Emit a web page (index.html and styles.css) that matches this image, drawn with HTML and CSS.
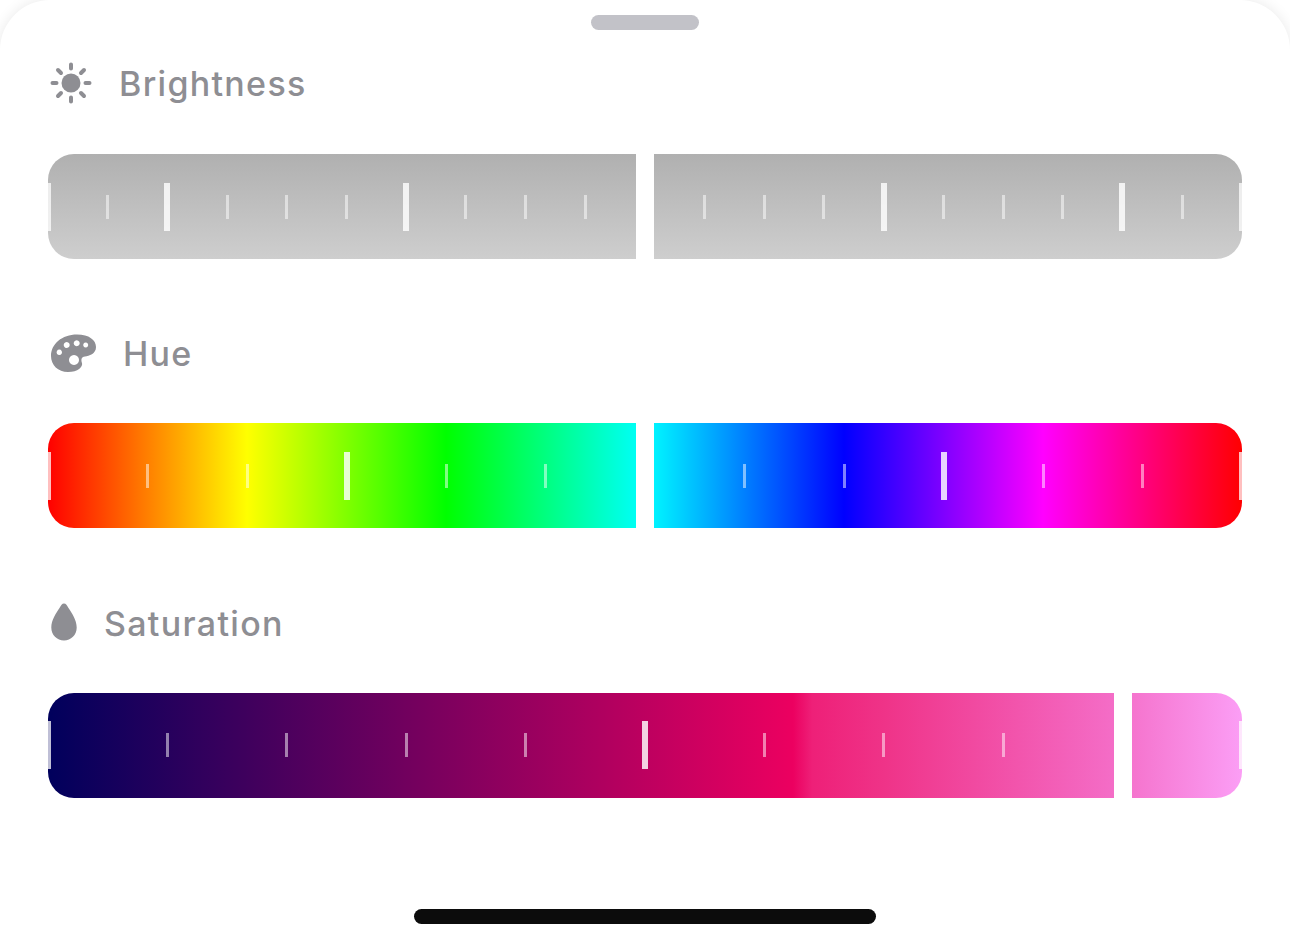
FILE: index.html
```html
<!DOCTYPE html>
<html lang="en">
<head>
    <meta charset="UTF-8">
    <meta name="viewport" content="width=device-width, initial-scale=1.0">
    <title>Color Adjustments</title>
    <link rel="stylesheet" href="styles.css">
</head>
<body>
    <div class="sheet">
        <div class="grabber"></div>

        <!-- Brightness -->
        <section class="control control-brightness">
            <h2 class="label">
                <svg class="icon icon-sun" width="44" height="44" viewBox="0 0 44 44">
                    <circle cx="22" cy="22" r="9.5" fill="#8e8e93"/>
                    <g stroke="#8e8e93" stroke-width="4" stroke-linecap="round">
                        <path d="M22 3.500v4M22 36.500v4M3.500 22h4M36.500 22h4M9 9l3 3M32 32l3 3M9 35l3-3M32 12l3-3"/>
                    </g>
                </svg>
                Brightness
            </h2>
            <div class="slider slider-brightness">
                <div class="ticks">
                    <i class="tick edge"></i><i class="tick"></i><i class="tick major"></i><i class="tick"></i><i class="tick"></i><i class="tick"></i><i class="tick major"></i><i class="tick"></i><i class="tick"></i><i class="tick"></i><i class="tick major"></i><i class="tick"></i><i class="tick"></i><i class="tick"></i><i class="tick major"></i><i class="tick"></i><i class="tick"></i><i class="tick"></i><i class="tick major"></i><i class="tick"></i><i class="tick edge"></i>
                </div>
                <div class="thumb"></div>
            </div>
        </section>

        <!-- Hue -->
        <section class="control control-hue">
            <h2 class="label">
                <svg class="icon icon-palette" width="48" height="40" viewBox="0 0 48 40">
                    <path fill-rule="evenodd" fill="#8e8e93" d="M28 1.500C40 1.500 47 7 47 14C47 21 40 23 36 23.500C32 24 32 27 33 30C34 34 29 39 19 39C9 39 2 32 2 23C2 11 13 1.500 28 1.500ZM25 22a5 5 0 1 0 .01 0ZM10.300 16.600a2.700 2.700 0 1 0 .01 0ZM17.700 9a3 3 0 1 0 .01 0ZM27.700 7.300a3 3 0 1 0 .01 0ZM36.700 9.500a2.500 2.500 0 1 0 .01 0Z"/>
                </svg>
                Hue
            </h2>
            <div class="slider slider-hue">
                <div class="ticks">
                    <i class="tick edge"></i><i class="tick"></i><i class="tick"></i><i class="tick major"></i><i class="tick"></i><i class="tick"></i><i class="tick major"></i><i class="tick"></i><i class="tick"></i><i class="tick major"></i><i class="tick"></i><i class="tick"></i><i class="tick edge"></i>
                </div>
                <div class="thumb"></div>
            </div>
        </section>

        <!-- Saturation -->
        <section class="control control-saturation">
            <h2 class="label">
                <svg class="icon icon-drop" width="26" height="38" viewBox="0 0 26 38">
                    <path fill="#8e8e93" d="M13 0.500C15 0.500 16 2.500 17.500 5C21 10.500 25.700 17 25.700 24.500C25.700 32 20 37.500 13 37.500C6 37.500 0.300 32 0.300 24.500C0.300 17 5 10.500 8.500 5C10 2.500 11 0.500 13 0.500Z"/>
                </svg>
                Saturation
            </h2>
            <div class="slider slider-saturation">
                <div class="ticks">
                    <i class="tick edge"></i><i class="tick"></i><i class="tick"></i><i class="tick"></i><i class="tick"></i><i class="tick major"></i><i class="tick"></i><i class="tick"></i><i class="tick"></i><i class="tick"></i><i class="tick edge"></i>
                </div>
                <div class="thumb"></div>
            </div>
        </section>

        <div class="home-indicator"></div>
    </div>
</body>
</html>
```

FILE: styles.css
```css
* {
    box-sizing: border-box;
}

body {
    margin: 0;
    background: #fff;
    overflow: hidden;
    font-family: 'Inter', 'Noto Sans', sans-serif;
}

.sheet {
    height: 948px;
    padding: 15px 48px 24px;
    background: #fff;
    border-radius: 50px 50px 0 0;
    box-shadow: 0 0 14px rgba(0, 0, 0, 0.09);
    display: flex;
    flex-direction: column;
}

.grabber {
    width: 108px;
    height: 15px;
    margin: 0 auto;
    border-radius: 8px;
    background: #c2c2c8;
}

.control {
    height: 241px;
    margin-bottom: 29px;
}

.control-brightness {
    margin-top: 31px;
}

.label {
    height: 44px;
    margin: 0 0 48px;
    display: flex;
    align-items: center;
    gap: 26px;
    padding-left: 1px;
    font-size: 34px;
    font-weight: 500;
    letter-spacing: 1.3px;
    color: #8e8e93;
}

.control-brightness .label {
    margin-bottom: 49px;
}

.control-saturation .label {
    gap: 27px;
    padding-left: 3px;
}

.icon-drop {
    margin-top: -2px;
}

.slider {
    position: relative;
    height: 105px;
    border-radius: 26px;
    overflow: hidden;
}

.slider-brightness {
    background: linear-gradient(180deg, #b0b0b0, #cecece);
}

.slider-hue {
    background: linear-gradient(90deg, #f00, #ff0 16.67%, #0f0 33.33%, #0ff 50%, #00f 66.67%, #f0f 83.33%, #f00);
}

.slider-saturation {
    background: linear-gradient(90deg, #00005c, #ec0060 62.4%, #ee2078 64%, #ef3388 70%, #f46cc6 89%, #fb9ef5);
}

.ticks {
    position: absolute;
    inset: 0;
    display: flex;
    justify-content: space-between;
    align-items: center;
}

.slider-saturation .ticks {
    bottom: 1px;
}

/* each tick is a zero width slot so the spacing stays even */
.tick {
    width: 0;
    display: flex;
    justify-content: center;
}

.tick::before {
    content: "";
    flex: none;
    width: 3px;
    height: 24px;
    background: rgba(255, 255, 255, 0.5);
}

.tick.major::before {
    width: 6px;
    height: 48px;
    background: rgba(255, 255, 255, 0.82);
}

.tick.edge::before {
    width: 6px;
    height: 48px;
    background: rgba(255, 255, 255, 0.75);
}

.thumb {
    position: absolute;
    top: 0;
    bottom: 0;
    left: 588px;
    width: 18px;
    background: #fff;
}

.slider-saturation .thumb {
    left: 1065.5px;
    width: 18.5px;
}

.home-indicator {
    width: 462px;
    height: 15px;
    margin: auto auto 0;
    border-radius: 8px;
    background: #0c0c0c;
}
```
